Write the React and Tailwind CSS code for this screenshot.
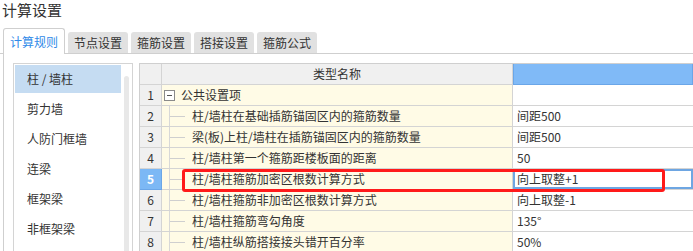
import { useState } from "react";

const tabs = ["计算规则", "节点设置", "箍筋设置", "搭接设置", "箍筋公式"];
const parts = ["柱 / 墙柱", "剪力墙", "人防门框墙", "连梁", "框架梁", "非框架梁"];

const rows = [
  { name: "柱/墙柱在基础插筋锚固区内的箍筋数量", value: "间距500" },
  { name: "梁(板)上柱/墙柱在插筋锚固区内的箍筋数量", value: "间距500" },
  { name: "柱/墙柱第一个箍筋距楼板面的距离", value: "50" },
  { name: "柱/墙柱箍筋加密区根数计算方式", value: "向上取整+1" },
  { name: "柱/墙柱箍筋非加密区根数计算方式", value: "向上取整-1" },
  { name: "柱/墙柱箍筋弯勾角度", value: "135°" },
  { name: "柱/墙柱纵筋搭接接头错开百分率", value: "50%" },
];

const App = () => {
  const [tab, setTab] = useState(0);
  const [part, setPart] = useState(0);
  const selRow = 5;

  return (
    <div className="relative h-[251px] w-[693px] overflow-hidden bg-white text-[12px] text-[#333] font-['Noto_Sans_CJK_SC',sans-serif]">
      <div className="h-[20px] pl-[2px] text-[15px] leading-[20px]">计算设置</div>

      {/* tabs */}
      <div className="mt-[8px] flex h-[26px] items-end gap-[3px] border-b border-[#cfcfcf] pl-[3px]">
        {tabs.map((t, i) =>
          i === tab ? (
            <div
              key={t}
              onClick={() => setTab(i)}
              className="-mb-px h-[26px] w-[62px] cursor-pointer rounded-t-[3px] border border-b-0 border-[#cfcfcf] bg-white text-center leading-[25px] text-[#2f8ae8]"
            >
              {t}
            </div>
          ) : (
            <div
              key={t}
              onClick={() => setTab(i)}
              className="h-[21px] w-[60px] cursor-pointer rounded-t-[3px] bg-[#e1e1e1] text-center leading-[21px] text-[#333]"
            >
              {t}
            </div>
          )
        )}
      </div>

      {/* content */}
      <div className="ml-[3px] flex h-[200px] border-l border-[#cfcfcf] pl-[9px] pt-[9px]">
        {/* part list */}
        <div className="flex w-[120px] shrink-0 border border-[#d4d4d4]">
          <div className="w-[108px] px-px">
            {parts.map((p, i) => (
              <div key={p} className="h-[30px] py-px" onClick={() => setPart(i)}>
                <div
                  className={`h-full cursor-pointer pl-[12px] leading-[28px] ${
                    i === part ? "bg-[#c5dcf2]" : ""
                  }`}
                >
                  {p}
                </div>
              </div>
            ))}
          </div>
          <div className="ml-[2px] mt-[12px] h-[200px] w-[5px] rounded-full bg-[#e8e8e8]" />
        </div>

        {/* table */}
        <div className="ml-[6px] grid flex-1 grid-cols-[22px_351px_1fr] content-start border-l border-t border-[#cfcfcf]">
          <div className="h-[21px] border-b border-r border-[#d4d4d4] bg-[#f0f0f0]" />
          <div className="h-[21px] border-b border-r border-[#d4d4d4] bg-[#f0f0f0] text-center leading-[20px]">
            类型名称
          </div>
          <div className="h-[21px] border border-t-0 border-[#6aa6e8] bg-[#80baf7]" />

          {/* row 1 */}
          <div className="h-[21px] border-b border-r border-[#d4d4d4] bg-[#f0f0f0] text-center leading-[20px]">1</div>
          <div className="flex h-[21px] items-center border-b border-r border-[#d4d4d4] bg-[#fffbe6] pl-[2px]">
            <div className="flex h-[11px] w-[11px] items-center justify-center border border-[#8a8a8a] bg-white">
              <div className="h-px w-[5px] bg-[#555]" />
            </div>
            <span className="ml-[6px] leading-[20px]">公共设置项</span>
          </div>
          <div className="h-[21px] border-b border-[#d4d4d4] bg-white" />

          {rows.map((r, i) => {
            const n = i + 2;
            const sel = n === selRow;
            return [
              <div
                key={`n${n}`}
                className={`h-[21px] border-b border-r text-center leading-[20px] ${
                  sel
                    ? "border-[#6aa6e8] bg-[#7cb8f5] font-bold text-white"
                    : "border-[#d4d4d4] bg-[#f0f0f0]"
                }`}
              >
                {n}
              </div>,
              <div
                key={`t${n}`}
                className="flex h-[21px] items-stretch border-b border-r border-[#d4d4d4] bg-[#fffbe6]"
              >
                <div className="w-[8px] shrink-0 border-r border-[#d8d8d8]" />
                <div className="flex w-[15px] shrink-0 items-center">
                  <div className="h-px w-full bg-[#cfcfcf]" />
                </div>
                <span className="ml-[7px] whitespace-nowrap leading-[20px]">{r.name}</span>
              </div>,
              <div
                key={`v${n}`}
                className={`h-[21px] border-b pl-[4px] leading-[20px] ${
                  sel ? "border-[#d4d4d4] bg-white shadow-[inset_0_0_0_2px_#6ea6e2]" : "border-[#d4d4d4] bg-white"
                }`}
              >
                {r.value}
              </div>,
            ];
          })}
        </div>
      </div>

      {/* annotation */}
      <div className="pointer-events-none absolute left-[182px] top-[169px] h-[23px] w-[483px] rounded-[3px] border-[3px] border-[#ff1a1a]" />
    </div>
  );
};

export default App;
